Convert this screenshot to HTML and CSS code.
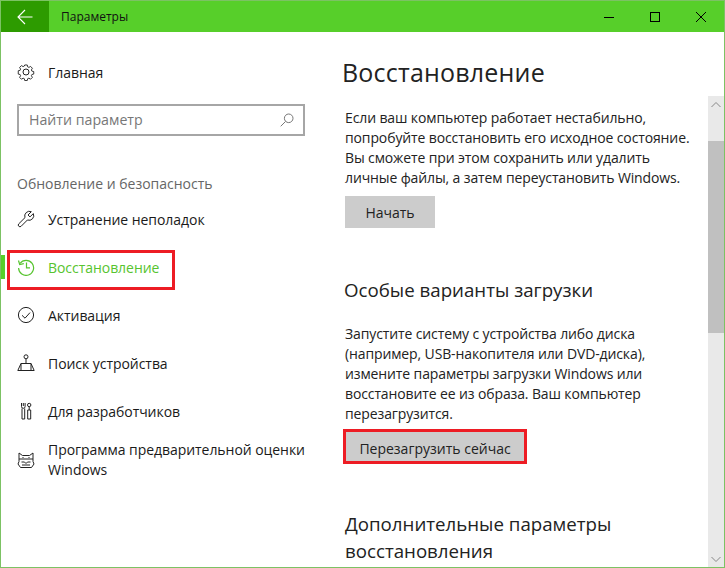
FILE: index.html
```html
<!DOCTYPE html>
<html lang="ru">
<head>
<meta charset="utf-8">
<title>Параметры</title>
<link rel="stylesheet" href="styles.css">
</head>
<body>
<div class="window">
  <header class="titlebar">
    <div class="back">
      <svg width="16" height="16" viewBox="0 0 16 16"><path d="M1 8H15.500M8 1L1 8l7 7" fill="none" stroke="#fff" stroke-width="1.100"/></svg>
    </div>
    <div class="title">Параметры</div>
    <div class="controls">
      <div class="ctl"><svg width="12" height="12" viewBox="0 0 12 12"><path d="M1 6.500H11" stroke="#000" stroke-width="1"/></svg></div>
      <div class="ctl"><svg width="12" height="12" viewBox="0 0 12 12"><rect x="1.500" y="1.500" width="9" height="9" fill="none" stroke="#000"/></svg></div>
      <div class="ctl"><svg width="12" height="12" viewBox="0 0 12 12"><path d="M1 1L11 11M11 1L1 11" stroke="#000" stroke-width="1"/></svg></div>
    </div>
  </header>
  <div class="body">
    <nav class="side">
      <div class="item home">
        <svg class="ico" width="18" height="18" viewBox="0 0 18 18"><circle cx="9" cy="9" r="3" fill="none" stroke="#222"/><path d="M7.600 1.200h2.800l.5 2.100 1.300.6 1.900-1.100 2 2-1.100 1.900.5 1.300 2.100.5v2.800l-2.100.5-.5 1.300 1.100 1.900-2 2-1.900-1.100-1.300.5-.5 2.100H7.600l-.5-2.100-1.300-.5-1.900 1.100-2-2 1.100-1.900-.5-1.300-2.100-.5V7.600l2.100-.5.5-1.300-1.100-1.900 2-2 1.900 1.100 1.300-.6z" fill="none" stroke="#222" transform="translate(.9 .9) scale(.9)"/></svg>
        <span>Главная</span>
      </div>
      <div class="search">
        <span class="search-text">Найти параметр</span>
        <svg width="14" height="14" viewBox="0 0 14 14"><circle cx="8.700" cy="5.300" r="4.300" fill="none" stroke="#777"/><path d="M5.600 8.400L.7 13.300" stroke="#777"/></svg>
      </div>
      <div class="section">Обновление и безопасность</div>
      <div class="item">
        <svg class="ico" width="18" height="18" viewBox="0 0 18 18"><path d="M16.300 3.600L13 6.900l-2-1.900 3.300-3.300A4.700 4.700 0 0 0 8 7.600L1.700 13.900a1.700 1.700 0 0 0 2.400 2.400L10.400 10a4.700 4.700 0 0 0 5.900-6.400z" fill="none" stroke="#222"/></svg>
        <span>Устранение неполадок</span>
      </div>
      <div class="item active">
        <svg class="ico" width="18" height="18" viewBox="0 0 18 18"><path d="M3 5.500A7.500 7.500 0 1 1 1.600 10" fill="none" stroke="#57c42f" stroke-width="1.200"/><path d="M1.500 2.500L2.700 6.500 6.800 5.700" fill="none" stroke="#57c42f" stroke-width="1.200"/><path d="M9.500 4.500V9.800H13" fill="none" stroke="#57c42f" stroke-width="1.200"/></svg>
        <span>Восстановление</span>
      </div>
      <div class="item">
        <svg class="ico" width="18" height="18" viewBox="0 0 18 18"><circle cx="9" cy="9" r="7.600" fill="none" stroke="#222"/><path d="M5 9.300L8 12.200 13 6.600" fill="none" stroke="#222"/></svg>
        <span>Активация</span>
      </div>
      <div class="item">
        <svg class="ico" width="18" height="18" viewBox="0 0 18 18"><circle cx="9" cy="2.800" r="2" fill="none" stroke="#222"/><path d="M9 5v4M4 16V9.500h10V16M.8 16.500H17.200M4 9.500L.8 16.500M14 9.500l3.200 7" fill="none" stroke="#222"/></svg>
        <span>Поиск устройства</span>
      </div>
      <div class="item">
        <svg class="ico" width="18" height="18" viewBox="0 0 18 18"><path d="M4.500 1v3.500a1.800 1.800 0 0 0 3.600 0V1M6.300 1v3M5 6.500V17h2.700V6.500M10.500 3a1.700 1.700 0 1 1 3.400 0 1.700 1.700 0 1 1-3.400 0M12.200 4.700V8M10.700 8h3v9h-3z" fill="none" stroke="#222"/></svg>
        <span>Для разработчиков</span>
      </div>
      <div class="item multi">
        <svg class="ico" width="18" height="18" viewBox="0 0 18 18"><path d="M2 2L5.500 4.500H12.500L16 2V10.500L17 13 14.500 16.500H3.500L1 13 2 10.500z" fill="none" stroke="#222"/><path d="M2 8H16M6 6v1M12 6v1M4.500 11h3l1.500 1.500 1.500-1.500h3M5 14h8" fill="none" stroke="#222"/></svg>
        <span>Программа предварительной оценки Windows</span>
      </div>
    </nav>
    <main class="content">
      <h1>Восстановление</h1>
      <p class="text first">Если ваш компьютер работает нестабильно, попробуйте восстановить его исходное состояние. Вы сможете при этом сохранить или удалить личные файлы, а затем переустановить Windows.</p>
      <button class="btn start">Начать</button>
      <h2 class="h-special">Особые варианты загрузки</h2>
      <p class="text second">Запустите систему с устройства либо диска (например, USB-накопителя или DVD-диска), измените параметры загрузки Windows или восстановите ее из образа. Ваш компьютер перезагрузится.</p>
      <button class="btn restart">Перезагрузить сейчас</button>
      <h2 class="h-more">Дополнительные параметры восстановления</h2>
    </main>
    <div class="scrollbar">
      <div class="arrow"><svg width="12" height="8" viewBox="0 0 12 8"><path d="M1.500 6L6 1.500 10.500 6" fill="none" stroke="#888"/></svg></div>
      <div class="track"><div class="thumb"></div></div>
      <div class="arrow"><svg width="12" height="8" viewBox="0 0 12 8"><path d="M1.500 2L6 6.500 10.500 2" fill="none" stroke="#888"/></svg></div>
    </div>
  </div>
  <div class="mark"></div>
  <div class="hl hl-side"></div>
  <div class="hl hl-btn"></div>
</div>
</body>
</html>
```
FILE: styles.css
```css
* { box-sizing: border-box; }
html, body { margin: 0; padding: 0; background: #fff; }
.window {
  position: relative;
  width: 725px; height: 568px;
  border: 1px solid #7cc264;
  display: flex; flex-direction: column;
  overflow: hidden;
  font-family: "Open Sans", "Noto Sans", sans-serif;
  color: #1a1a1a;
}
.titlebar { height: 31px; flex: none; display: flex; align-items: center; background: #57cf2a; }
.back { width: 48px; height: 31px; background: #2d9b00; display: flex; align-items: center; justify-content: center; }
.title { margin-left: 12px; font-size: 12px; color: #111; flex: 1; }
.controls { display: flex; }
.ctl { width: 46px; height: 31px; display: flex; align-items: center; justify-content: center; }
.body { flex: 1; display: flex; min-height: 0; }
.side { width: 330px; flex: none; padding-top: 25px; }
.item { display: flex; align-items: center; height: 48px; padding-left: 16px; font-size: 14px; letter-spacing: -.05px; }
.item .ico { flex: none; margin-right: 13px; }
.home { height: 30px; }
.search {
  margin: 17px 0 0 16px; width: 288px; height: 32px;
  border: 2px solid #a6a6a6;
  display: flex; align-items: center; justify-content: space-between;
  padding: 0 9px 0 10px;
  font-size: 14.200px; color: #777;
}
.search-text { margin-bottom: 2px; }
.section { margin: 38px 0 0 16px; font-size: 14px; color: #666; line-height: 20px; height: 21px; }
.active { color: #57c42f; }
.multi { line-height: 20px; width: 310px; padding-top: 2px; }
.content { flex: 1; padding: 23px 0 0 14px; overflow: hidden; min-width: 0; }
h1 { margin: 0 0 0 -3px; font-size: 25px; font-weight: 400; line-height: 34px; color: #222; letter-spacing: .2px; }
.text { margin: 0; font-size: 14px; line-height: 20px; letter-spacing: -.12px; width: 352px; color: #222; }
.first { margin-top: 19px; }
.btn {
  display: block; border: 0; background: #ccc; font: inherit; font-size: 14px; color: #222; height: 32px; padding: 0;
}
.start { margin-top: 8px; width: 90px; }
h2 { margin: 0 0 0 -1px; font-weight: 400; font-size: 18.700px; color: #222; }
.h-special { margin-top: 49px; line-height: 26px; }
.second { margin-top: 21px; }
.restart { margin-top: 8px; width: 180px; }
.h-more { margin: 46px 0 0; line-height: 27px; width: 320px; }
.scrollbar { width: 16px; flex: none; margin-top: 64px; background: #e9e9e9; display: flex; flex-direction: column; }
.arrow { height: 17px; flex: none; display: flex; align-items: center; justify-content: center; }
.track { flex: 1; padding-top: 28px; }
.thumb { height: 192px; background: #c0c0c0; }
.mark { position: absolute; left: 0; top: 254px; width: 4px; height: 24px; background: #57cf2a; }
.hl { position: absolute; border: 3px solid #ed1c24; }
.hl-side { left: 6px; top: 249px; width: 168px; height: 40px; }
.hl-btn { left: 342px; top: 428px; width: 184px; height: 35px; }
```
